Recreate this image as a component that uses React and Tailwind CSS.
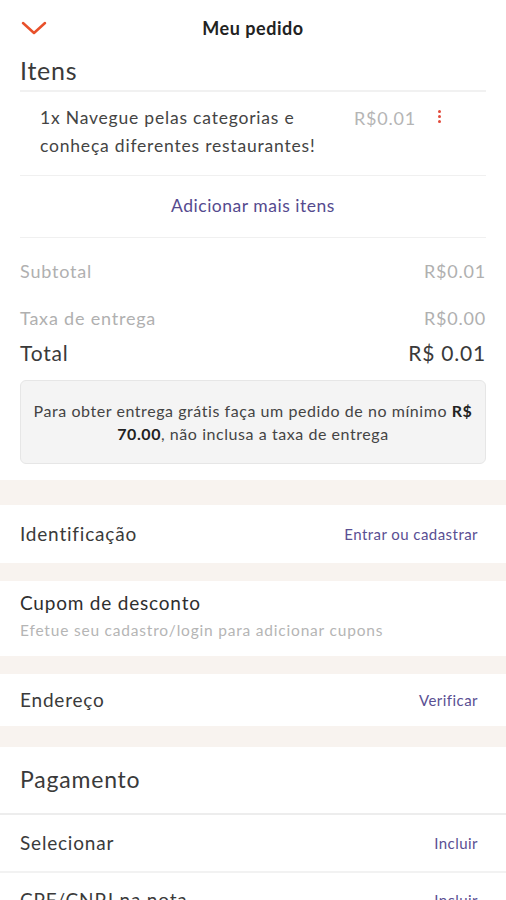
import React from "react";

const font = { fontFamily: "Lato, 'Open Sans', sans-serif" };

function Band({ h }) {
  return <div className={`bg-[#f8f3ef] ${h}`} />;
}

function LinkRow({ label, action, height }) {
  return (
    <div className={`flex items-center justify-between px-5 ${height}`}>
      <span className="text-[19px] text-[#3a3a3a]">{label}</span>
      <span className="text-[15px] text-[#5a4f93] pr-2 tracking-[0.03em]">{action}</span>
    </div>
  );
}

export default function App() {
  return (
    <div className="w-[506px] h-[900px] overflow-hidden bg-white tracking-[0.05em]" style={font}>
      {/* Header */}
      <div className="relative h-[52px] flex items-center justify-center">
        <svg
          className="absolute left-[21px] top-[21px]"
          width="26"
          height="14"
          viewBox="0 0 26 14"
          fill="none"
        >
          <path d="M2 2 L13 12 L24 2" stroke="#e8502a" strokeWidth="2.5" strokeLinecap="round" strokeLinejoin="round" />
        </svg>
        <span className="text-[18px] font-bold text-[#222] mt-1 tracking-[0.03em]">Meu pedido</span>
      </div>

      <div className="px-5">
        <h2 className="text-[25px] leading-[30px] text-[#3a3a3a] mt-[3px] tracking-[0.03em]">Itens</h2>
        <div className="mt-[5px] border-t-2 border-[#f1f1f1]" />

        {/* Item */}
        <div className="flex items-start pl-5 pt-[12px] pb-[15px] border-b border-[#f0f0f0]">
          <p className="w-[300px] text-[17.5px] leading-[28px] text-[#444]">
            1x Navegue pelas categorias e conheça diferentes restaurantes!
          </p>
          <span className="ml-[14px] text-[18px] leading-[28px] text-[#b5b5b5]">R$0.01</span>
          <span className="ml-[22px] mt-[6px] flex flex-col gap-[2px]">
            <span className="w-[3px] h-[3px] rounded-full bg-[#e24a3b]" />
            <span className="w-[3px] h-[3px] rounded-full bg-[#e24a3b]" />
            <span className="w-[3px] h-[3px] rounded-full bg-[#e24a3b]" />
          </span>
        </div>

        <div className="h-[62px] flex items-center justify-center border-b border-[#f0f0f0]">
          <span className="text-[17.5px] text-[#554a8e] tracking-[0.03em]">Adicionar mais itens</span>
        </div>

        {/* Totals */}
        <div className="pt-[19px]">
          <div className="flex justify-between text-[18px] leading-[28px] text-[#b0b0b0]">
            <span>Subtotal</span>
            <span>R$0.01</span>
          </div>
          <div className="flex justify-between text-[18px] leading-[28px] text-[#b0b0b0] mt-[19px]">
            <span>Taxa de entrega</span>
            <span>R$0.00</span>
          </div>
          <div className="flex justify-between text-[21px] leading-[28px] text-[#3a3a3a] mt-[7px]">
            <span>Total</span>
            <span>R$ 0.01</span>
          </div>
        </div>

        <div className="mt-[13px] mb-[16px] rounded-[6px] border border-[#e6e6e6] bg-[#f4f4f4] px-[4px] h-[84px] flex items-center justify-center">
          <p className="text-center text-[16px] leading-[23px] text-[#444] tracking-[0.035em]">
            Para obter entrega grátis faça um pedido de no mínimo <b className="text-[#222]">R$</b>
            <br />
            <b className="text-[#222]">70.00</b>, não inclusa a taxa de entrega
          </p>
        </div>
      </div>

      <Band h="h-[25px]" />
      <LinkRow label="Identificação" action="Entrar ou cadastrar" height="h-[58px]" />
      <Band h="h-[18px]" />
      <div className="px-5 h-[75px] flex flex-col pt-[9px]">
        <span className="text-[19px] leading-[26px] text-[#2e2e2e]">Cupom de desconto</span>
        <span className="text-[15.5px] leading-[20px] text-[#b5b5b5] mt-[4px]">
          Efetue seu cadastro/login para adicionar cupons
        </span>
      </div>
      <Band h="h-[18px]" />
      <LinkRow label="Endereço" action="Verificar" height="h-[52px]" />
      <Band h="h-[21px]" />
      <div className="px-5 h-[68px] flex items-center border-b-2 border-[#ededed]">
        <span className="text-[23px] text-[#3a3a3a] mb-[2px]">Pagamento</span>
      </div>
      <div className="border-b-2 border-[#f2f2f2]">
        <LinkRow label="Selecionar" action="Incluir" height="h-[56px]" />
      </div>
      <LinkRow label="CPF/CNPJ na nota" action="Incluir" height="h-[54px]" />
    </div>
  );
}
